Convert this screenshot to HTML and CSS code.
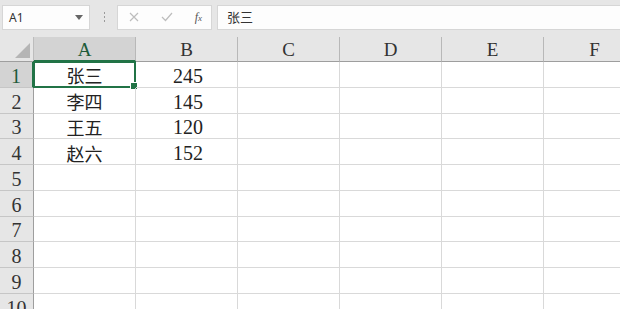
FILE: index.html
```html
<!DOCTYPE html>
<html>
<head>
  <meta charset="UTF-8">
  <title>Sheet1</title>
  <link rel="stylesheet" href="styles.css">
</head>
<body>
  <div class="toolbar">
    <div class="name-box">
      <span>A1</span>
      <svg class="caret" width="8" height="5" viewBox="0 0 8 5"><path d="M0 0h8L4 5z" fill="#666"/></svg>
    </div>
    <div class="grip"><i></i><i></i><i></i></div>
    <div class="fx-box">
      <svg width="10" height="10" viewBox="0 0 10 10"><path d="M1 1l8 8M9 1l-8 8" stroke="#bdbdbd" stroke-width="1.2"/></svg>
      <svg width="12" height="10" viewBox="0 0 12 10"><path d="M1 5l3.5 3.5L11 1" stroke="#bdbdbd" stroke-width="1.2" fill="none"/></svg>
      <span class="fx"><i>f</i><small>x</small></span>
    </div>
    <div class="formula">张三</div>
  </div>

  <div class="sheet">
    <div class="corner"><span class="tri"></span></div>
    <div class="col-head active">A</div>
    <div class="col-head">B</div>
    <div class="col-head">C</div>
    <div class="col-head">D</div>
    <div class="col-head">E</div>
    <div class="col-head">F</div>

    <div class="row-head active">1</div>
    <div class="cell selected">张三<span class="handle"></span></div>
    <div class="cell num">245</div>
    <div class="cell"></div><div class="cell"></div><div class="cell"></div><div class="cell"></div>

    <div class="row-head">2</div>
    <div class="cell">李四</div>
    <div class="cell num">145</div>
    <div class="cell"></div><div class="cell"></div><div class="cell"></div><div class="cell"></div>

    <div class="row-head">3</div>
    <div class="cell">王五</div>
    <div class="cell num">120</div>
    <div class="cell"></div><div class="cell"></div><div class="cell"></div><div class="cell"></div>

    <div class="row-head">4</div>
    <div class="cell">赵六</div>
    <div class="cell num">152</div>
    <div class="cell"></div><div class="cell"></div><div class="cell"></div><div class="cell"></div>

    <div class="row-head">5</div>
    <div class="cell"></div><div class="cell"></div><div class="cell"></div><div class="cell"></div><div class="cell"></div><div class="cell"></div>
    <div class="row-head">6</div>
    <div class="cell"></div><div class="cell"></div><div class="cell"></div><div class="cell"></div><div class="cell"></div><div class="cell"></div>
    <div class="row-head">7</div>
    <div class="cell"></div><div class="cell"></div><div class="cell"></div><div class="cell"></div><div class="cell"></div><div class="cell"></div>
    <div class="row-head">8</div>
    <div class="cell"></div><div class="cell"></div><div class="cell"></div><div class="cell"></div><div class="cell"></div><div class="cell"></div>
    <div class="row-head">9</div>
    <div class="cell"></div><div class="cell"></div><div class="cell"></div><div class="cell"></div><div class="cell"></div><div class="cell"></div>
    <div class="row-head">10</div>
    <div class="cell"></div><div class="cell"></div><div class="cell"></div><div class="cell"></div><div class="cell"></div><div class="cell"></div>
  </div>
</body>
</html>
```

FILE: styles.css
```css
body {
  margin: 0;
  width: 620px;
  height: 309px;
  overflow: hidden;
  background: #fff;
  font-family: "Liberation Serif", "Noto Sans CJK SC", serif;
  color: #222;
}
.toolbar {
  display: flex;
  align-items: center;
  height: 37px;
  background: #e6e6e6;
  padding: 0 0 0 2px;
  box-sizing: border-box;
}
.name-box {
  display: flex;
  align-items: center;
  justify-content: space-between;
  width: 88px;
  height: 25px;
  margin-top: -3px;
  padding: 0 6px 0 6px;
  box-sizing: border-box;
  background: #fdfdfd;
  border: 1px solid #d6d6d6;
  font-family: "Noto Sans", "Noto Sans CJK SC", sans-serif;
  font-size: 12px;
  color: #333;
}
.grip {
  display: flex;
  flex-direction: column;
  gap: 2px;
  margin: -3px 12px 0 14px;
}
.grip i {
  width: 1px;
  height: 2px;
  background: #9a9a9a;
}
.fx-box {
  display: flex;
  align-items: center;
  justify-content: space-between;
  width: 95px;
  height: 25px;
  margin-top: -3px;
  padding: 0 9px 0 11px;
  box-sizing: border-box;
  background: #fdfdfd;
  border: 1px solid #d6d6d6;
}
.fx {
  font-family: "Liberation Serif", serif;
  color: #555;
  font-size: 12px;
}
.fx small {
  font-size: 9px;
  font-style: italic;
}
.formula {
  flex: 1;
  height: 25px;
  margin: -3px 0 0 5px;
  padding-left: 9px;
  box-sizing: border-box;
  background: #fdfdfd;
  border: 1px solid #d6d6d6;
  border-right: none;
  font-family: "Noto Sans CJK SC", sans-serif;
  font-size: 13px;
  line-height: 22px;
  color: #333;
}
.sheet {
  display: grid;
  grid-template-columns: 34px repeat(6, 102px);
  grid-template-rows: 25px;
  grid-auto-rows: 25.75px;
}
.sheet > div {
  box-sizing: border-box;
  display: flex;
  align-items: center;
  justify-content: center;
}
.corner {
  position: relative;
  background: #e6e6e6;
  border-right: 1px solid #bdbdbd;
  border-bottom: 1px solid #9e9e9e;
}
.tri {
  position: absolute;
  right: 3px;
  bottom: 3px;
  width: 0;
  height: 0;
  border-left: 15px solid transparent;
  border-bottom: 15px solid #b5b5b5;
}
.col-head {
  background: #e6e6e6;
  border-right: 1px solid #b8b8b8;
  border-bottom: 1px solid #9e9e9e;
  font-size: 19px;
  color: #333;
  padding-top: 2px;
}
.col-head.active {
  background: #d3d3d3;
  color: #1e5b3a;
  border-bottom: 2px solid #217346;
}
.row-head {
  background: #e6e6e6;
  border-right: 1px solid #9e9e9e;
  border-bottom: 1px solid #c6c6c6;
  font-size: 20px;
  color: #333;
  padding-top: 4px;
}
.row-head.active {
  background: #d3d3d3;
  color: #1e5b3a;
  border-right: 2px solid #217346;
}
.cell {
  position: relative;
  border-right: 1px solid #d9d9d9;
  border-bottom: 1px solid #d9d9d9;
  font-size: 18px;
  color: #222;
  padding-top: 2px;
}
.cell.num {
  font-size: 20px;
  padding-top: 4px;
  padding-left: 3px;
}
.cell.selected {
  border: 2px solid #217346;
  margin: -1px 0 0 -1px;
}
.handle {
  position: absolute;
  right: -4px;
  bottom: -4px;
  width: 6px;
  height: 6px;
  background: #217346;
  border: 1px solid #fff;
}
```
